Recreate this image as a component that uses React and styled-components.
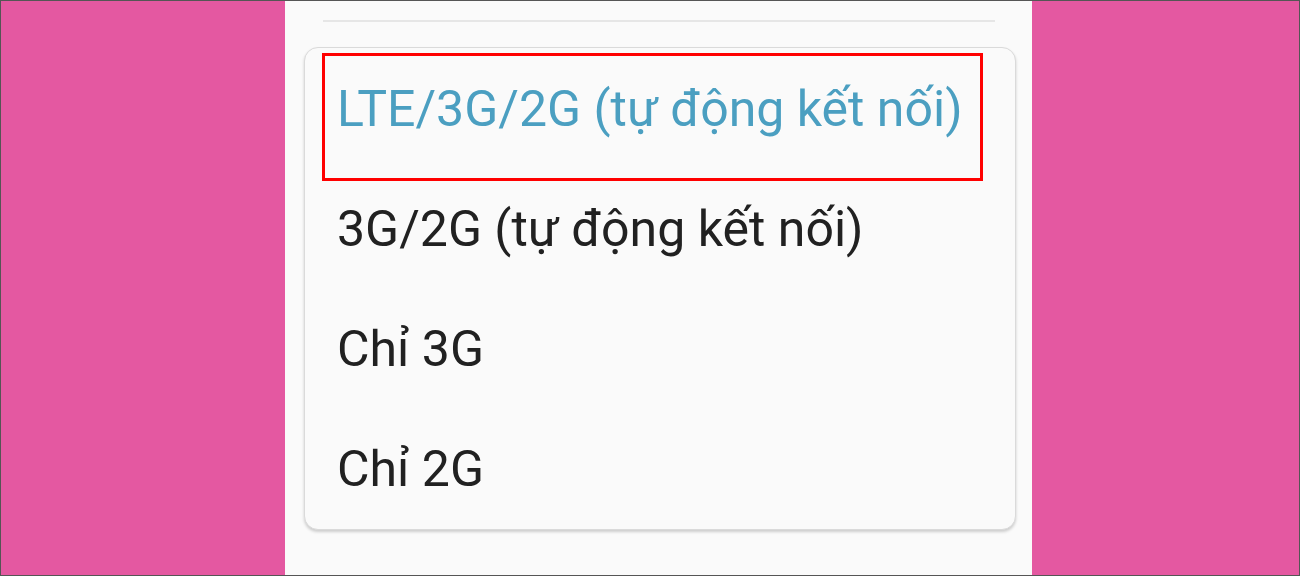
import React from 'react';
import styled, {createGlobalStyle} from 'styled-components';

const GlobalStyle = createGlobalStyle`
  html, body {
    margin: 0;
    padding: 0;
    background: #fafafa;
  }
  * {
    box-sizing: border-box;
  }
`;

const Frame = styled.div`
  display: flex;
  width: 1300px;
  height: 576px;
  border: 1px solid #555;
  overflow: hidden;
  font-family: Roboto, 'Noto Sans', sans-serif;
`;

const Side = styled.div`
  width: ${props => props.width}px;
  flex-shrink: 0;
  background: #e458a1;
`;

const Screen = styled.div`
  width: 747px;
  flex-shrink: 0;
  display: flex;
  flex-direction: column;
  background: #fafafa;
  padding-top: 19px;
`;

const Divider = styled.div`
  height: 2px;
  margin: 0 37px 0 38px;
  background: #e6e6e6;
`;

const Card = styled.ul`
  list-style: none;
  margin: 25px 16px 0 19px;
  padding: 1px 0 0;
  background: #fafafa;
  border: 1px solid #dadada;
  border-radius: 14px;
  box-shadow: 0 2px 3px rgba(0, 0, 0, 0.18);
`;

const Option = styled.li`
  position: relative;
  height: 120px;
  display: flex;
  align-items: center;
  padding-left: 32px;
  font-size: 50px;
  line-height: 120px;
  color: ${props => (props.selected ? '#4b9fc1' : '#212121')};
  white-space: nowrap;

  ${props =>
    props.highlighted &&
    `
    &::after {
      content: '';
      position: absolute;
      left: 17px;
      top: 4px;
      width: 655px;
      height: 122px;
      border: 3px solid #f00;
    }
  `}
`;

const options = [
  'LTE/3G/2G (tự động kết nối)',
  '3G/2G (tự động kết nối)',
  'Chỉ 3G',
  'Chỉ 2G',
];

function App() {
  return (
    <>
      <GlobalStyle />
      <Frame>
        <Side width={284} />
        <Screen>
          <Divider />
          <Card>
            {options.map((label, i) => (
              <Option key={label} selected={i === 0} highlighted={i === 0}>
                {label}
              </Option>
            ))}
          </Card>
        </Screen>
        <Side width={267} />
      </Frame>
    </>
  );
}

export default App;
